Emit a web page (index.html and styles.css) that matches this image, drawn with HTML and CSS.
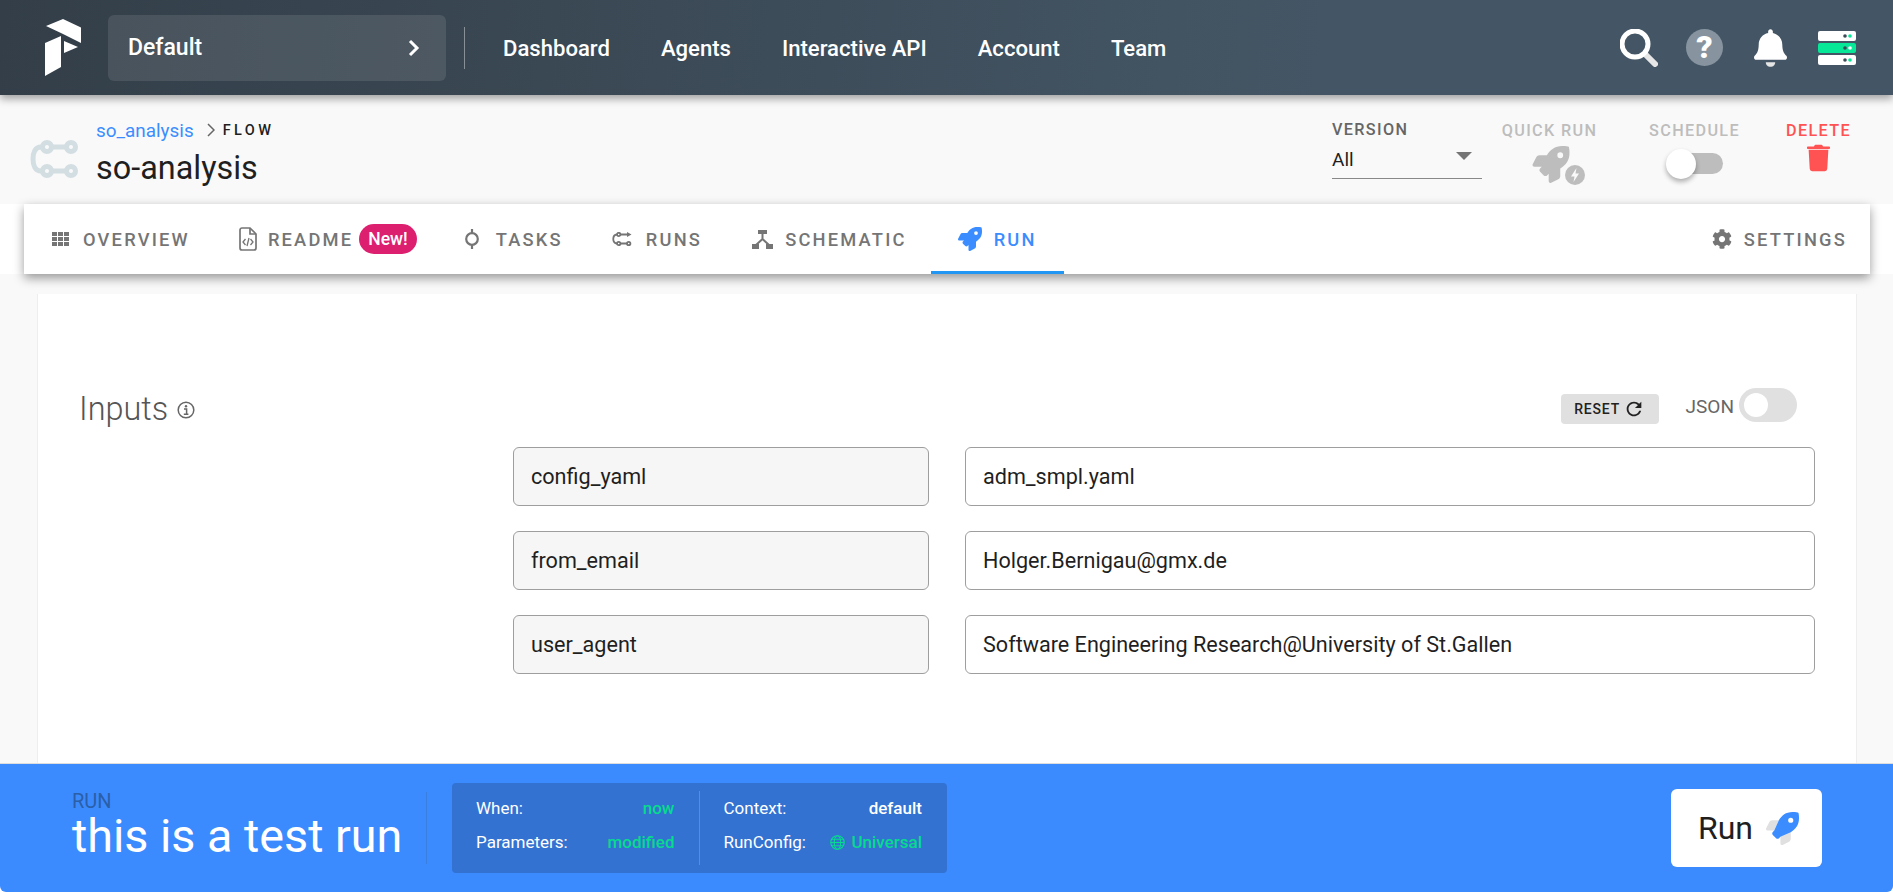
FILE: index.html
```html
<!DOCTYPE html>
<html lang="en">
<head>
  <meta charset="UTF-8">
  <meta name="viewport" content="width=device-width, initial-scale=1.0">
  <title>so-analysis | Run</title>
  <link rel="stylesheet" href="styles.css">
</head>
<body>
  <!-- Top Navigation -->
  <header class="topbar">
    <svg class="logo" viewBox="0 0 36 57">
      <path fill="#fff" d="M1 7 18 0 36 8.500V24L17 14.500Z"/>
      <path fill="#fff" d="M0 24 16 17V48L0 57Z"/>
      <path fill="#fff" d="M19 22 33 28 19 34Z"/>
    </svg>
    <div class="team-select">
      <span>Default</span>
      <svg class="team-chevron" viewBox="0 0 12 18"><path d="M2 2l7 7-7 7" fill="none" stroke="#fff" stroke-width="3"/></svg>
    </div>
    <div class="nav-divider"></div>
    <nav class="main-nav">
      <a>Dashboard</a>
      <a>Agents</a>
      <a>Interactive API</a>
      <a>Account</a>
      <a>Team</a>
    </nav>
    <div class="top-icons">
      <svg class="icon-search" viewBox="0 0 38 38">
        <path d="M25 25l10 10" stroke="#e6e6e6" stroke-width="6" stroke-linecap="round"/>
        <circle cx="15" cy="15" r="13" fill="none" stroke="#fff" stroke-width="5"/>
      </svg>
      <div class="help-icon">?</div>
      <svg class="icon-bell" viewBox="0 0 448 512">
        <path fill="#e6e6e6" d="M224 512c35.320 0 63.970-28.650 63.970-64H160.030c0 35.350 28.650 64 63.970 64z"/>
        <path fill="#fff" d="M439.390 362.290c-19.320-20.760-55.470-51.990-55.470-154.290 0-77.700-54.480-139.900-127.940-155.160V32c0-17.670-14.320-32-31.980-32s-31.980 14.330-31.980 32v20.840C118.560 68.100 64.080 130.300 64.080 208c0 102.300-36.150 133.530-55.470 154.290-6 6.450-8.660 14.160-8.610 21.710.11 16.400 12.980 32 32.100 32h383.800c19.120 0 32-15.600 32.100-32 .05-7.550-2.610-15.270-8.610-21.710z"/>
      </svg>
      <svg class="icon-server" viewBox="0 0 38 34">
        <rect width="38" height="10" rx="2" fill="#fff"/>
        <rect y="12" width="38" height="10" rx="2" fill="#07e798"/>
        <rect y="24" width="38" height="10" rx="2" fill="#fff"/>
        <circle cx="27" cy="5" r="1.800" fill="#3b4a57"/><circle cx="32" cy="5" r="1.800" fill="#07e798"/>
        <circle cx="27" cy="17" r="1.800" fill="#3b4a57"/><circle cx="32" cy="17" r="1.800" fill="#fff"/>
        <circle cx="27" cy="29" r="1.800" fill="#3b4a57"/><circle cx="32" cy="29" r="1.800" fill="#07e798"/>
      </svg>
    </div>
  </header>

  <!-- Flow Header -->
  <section class="flow-head">
    <svg class="flow-icon" viewBox="0 0 48 38">
      <g fill="none" stroke="#d3dee3" stroke-width="5">
        <circle cx="17" cy="7" r="4.500"/>
        <circle cx="41" cy="7" r="4.500"/>
        <circle cx="17" cy="31" r="4.500"/>
        <circle cx="41" cy="31" r="4.500"/>
        <path d="M22 7H36M22 31H36M12 7H11C5 7 3 13 3 19s2 12 8 12h1"/>
      </g>
    </svg>
    <div class="flow-title">
      <div class="crumbs">
        <a>so_analysis</a>
        <svg class="crumb-chevron" viewBox="0 0 8 14"><path d="M1 1l6 6-6 6" fill="none" stroke="#666" stroke-width="1.500"/></svg>
        <span>FLOW</span>
      </div>
      <h1>so-analysis</h1>
    </div>
    <div class="flow-actions">
      <div class="version">
        <label>VERSION</label>
        <div class="version-select"><span>All</span><i class="caret"></i></div>
      </div>
      <div class="action quick-run">
        <label>QUICK RUN</label>
        <div class="quick-icon">
          <svg class="quick-rocket" viewBox="0 0 512 512"><path fill="#bdbdbd" d="M505.120 19.090c-1.190-5.530-6.660-11-12.210-12.190C460.720 0 435.510 0 410.410 0 307.180 0 245.270 55.200 199.050 128H94.840c-16.350.02-35.560 11.880-42.890 26.480L2.520 253.300A28.400 28.400 0 0 0 0 264a24 24 0 0 0 24 24h103.820l-22.470 22.470c-11.370 11.360-13 32.260 0 45.250l50.900 50.900c11.160 11.190 32.160 13.160 45.280 0l22.470-22.470V488a24 24 0 0 0 24 24 28.560 28.560 0 0 0 10.710-2.520l98.730-49.390c14.630-7.300 26.510-26.500 26.510-42.860V312.800c72.600-46.310 128.030-108.410 128.030-211.100.03-25.200.03-50.400-6.880-82.610zM384.040 168a40 40 0 1 1 40.010-40 40.020 40.020 0 0 1-40.010 40z"/></svg>
          <svg class="quick-bolt" viewBox="0 0 22 22">
            <circle cx="11" cy="11" r="10" fill="#bdbdbd"/>
            <path d="M12.500 4 7 12.500h3.500L9.500 18 15 9.500h-3.500z" fill="#fafafa"/>
          </svg>
        </div>
      </div>
      <div class="action schedule">
        <label>SCHEDULE</label>
        <div class="switch"><i></i></div>
      </div>
      <div class="action delete">
        <label>DELETE</label>
        <svg class="trash" viewBox="0 0 448 512"><path fill="#ff5252" d="M432 32H312l-9.400-18.700A24 24 0 0 0 281.100 0H166.800a23.720 23.720 0 0 0-21.400 13.300L136 32H16A16 16 0 0 0 0 48v16a16 16 0 0 0 16 16h416a16 16 0 0 0 16-16V48a16 16 0 0 0-16-16zM53.200 467a48 48 0 0 0 47.900 45h245.800a48 48 0 0 0 47.900-45L416 96H32z"/></svg>
      </div>
    </div>
  </section>

  <!-- Tabs -->
  <div class="tabs">
    <a class="tab">
      <svg class="tab-icon th" viewBox="0 0 17 14"><path fill="#757575" d="M0 0h5v4H0zM6 0h5v4H6zM12 0h5v4h-5zM0 5h5v4H0zM6 5h5v4H6zM12 5h5v4h-5zM0 10h5v4H0zM6 10h5v4H6zM12 10h5v4h-5z"/></svg>
      OVERVIEW
    </a>
    <a class="tab">
      <svg class="tab-icon file" viewBox="0 0 18 24">
        <path d="M1 3a2 2 0 0 1 2-2h8l6 6v14a2 2 0 0 1-2 2H3a2 2 0 0 1-2-2z" fill="none" stroke="#757575" stroke-width="1.700"/>
        <path d="M11 1v6h6" fill="none" stroke="#757575" stroke-width="1.700"/>
        <path d="M6.500 12 4 15l2.500 3M11.500 12l2.500 3-2.500 3M10 11l-2 8" fill="none" stroke="#757575" stroke-width="1.300"/>
      </svg>
      README
      <span class="badge">New!</span>
    </a>
    <a class="tab tab-tasks">
      <svg class="tab-icon task" viewBox="0 0 16 20">
        <circle cx="8" cy="10" r="5.800" fill="none" stroke="#757575" stroke-width="2.200"/>
        <path d="M8 0v4M8 16v4" stroke="#757575" stroke-width="2.200"/>
      </svg>
      TASKS
    </a>
    <a class="tab">
      <svg class="tab-icon runs" viewBox="0 0 20 15">
        <g fill="none" stroke="#757575" stroke-width="1.800">
          <circle cx="6.700" cy="2.500" r="1.700"/>
          <circle cx="6.700" cy="11.500" r="1.700"/>
          <circle cx="16.700" cy="11.500" r="1.700"/>
          <path d="M8.500 11.500H15M5 2.500C0 3 0 11 5 11.500M9 2.500h6"/>
        </g>
        <path d="M15 0l4.500 2.500L15 5z" fill="#757575"/>
      </svg>
      RUNS
    </a>
    <a class="tab tab-schematic">
      <svg class="tab-icon schematic" viewBox="0 0 21 19">
        <path fill="#757575" d="M6 0h9v4H6zM0 14h7v5H0zM14 14h7v5h-7z"/>
        <path d="M10.500 3v6M10.500 9 4 15M10.500 9 17 15" fill="none" stroke="#757575" stroke-width="2"/>
      </svg>
      SCHEMATIC
    </a>
    <a class="tab tab-active">
      <svg class="tab-icon rocket" viewBox="0 0 512 512"><path fill="#3b8dff" d="M505.120 19.090c-1.190-5.530-6.660-11-12.210-12.190C460.720 0 435.510 0 410.410 0 307.180 0 245.270 55.200 199.050 128H94.840c-16.350.02-35.560 11.880-42.890 26.480L2.520 253.300A28.400 28.400 0 0 0 0 264a24 24 0 0 0 24 24h103.820l-22.470 22.470c-11.370 11.360-13 32.260 0 45.250l50.900 50.900c11.160 11.190 32.160 13.160 45.280 0l22.470-22.470V488a24 24 0 0 0 24 24 28.560 28.560 0 0 0 10.710-2.520l98.730-49.390c14.630-7.300 26.510-26.500 26.510-42.860V312.800c72.600-46.310 128.030-108.410 128.030-211.100.03-25.200.03-50.400-6.880-82.610zM384.040 168a40 40 0 1 1 40.010-40 40.020 40.020 0 0 1-40.010 40z"/></svg>
      RUN
    </a>
    <a class="tab tab-settings">
      <svg class="tab-icon gear" viewBox="0 0 512 512"><path fill="#757575" d="M487.400 315.700l-42.600-24.600c4.300-23.200 4.300-47 0-70.200l42.600-24.600c4.900-2.800 7.100-8.600 5.500-14-11.100-35.600-30-67.800-54.700-94.600-3.800-4.100-10-5.100-14.800-2.300L380.800 110c-17.900-15.400-38.500-27.300-60.800-35.100V25.800c0-5.600-3.900-10.500-9.400-11.700-36.700-8.200-74.300-7.800-109.200 0-5.500 1.200-9.400 6.100-9.400 11.700V75c-22.200 7.900-42.800 19.800-60.800 35.100L88.700 85.500c-4.900-2.800-11-1.900-14.800 2.300-24.700 26.700-43.600 58.900-54.700 94.600-1.700 5.400.6 11.200 5.500 14L67.300 221c-4.300 23.200-4.300 47 0 70.200l-42.600 24.600c-4.900 2.800-7.100 8.600-5.500 14 11.100 35.600 30 67.800 54.700 94.600 3.800 4.100 10 5.100 14.800 2.300l42.600-24.600c17.900 15.400 38.500 27.300 60.800 35.100v49.200c0 5.600 3.900 10.500 9.400 11.700 36.700 8.200 74.300 7.800 109.200 0 5.500-1.200 9.400-6.100 9.400-11.700v-49.200c22.200-7.900 42.800-19.800 60.800-35.100l42.600 24.600c4.900 2.800 11 1.900 14.800-2.300 24.700-26.700 43.600-58.900 54.700-94.600 1.500-5.500-.7-11.300-5.600-14.100zM256 336c-44.100 0-80-35.900-80-80s35.900-80 80-80 80 35.900 80 80-35.900 80-80 80z"/></svg>
      SETTINGS
    </a>
  </div>

  <!-- Run Form -->
  <main class="content">
    <div class="card">
      <div class="inputs-head">
        <div class="inputs-title">
          Inputs
          <svg class="info-icon" viewBox="0 0 18 18">
            <circle cx="9" cy="9" r="7.800" fill="none" stroke="#666" stroke-width="1.500"/>
            <path d="M7 8h2.600v5M6.800 13.200h4.600" fill="none" stroke="#666" stroke-width="1.500"/>
            <circle cx="9" cy="5.300" r="1.200" fill="#666"/>
          </svg>
        </div>
        <button class="reset-btn">
          RESET
          <svg viewBox="0 0 24 24"><path fill="#222" d="M17.650 6.350C16.200 4.900 14.210 4 12 4c-4.420 0-7.990 3.580-7.990 8s3.570 8 7.990 8c3.730 0 6.840-2.550 7.730-6h-2.080c-.82 2.330-3.040 4-5.650 4-3.310 0-6-2.690-6-6s2.690-6 6-6c1.660 0 3.140.69 4.220 1.780L13 11h7V4l-2.350 2.350z"/></svg>
        </button>
        <span class="json-label">JSON</span>
        <div class="json-switch"><i></i></div>
      </div>
      <div class="param-row">
        <div class="param-key">config_yaml</div>
        <div class="param-value">adm_smpl.yaml</div>
      </div>
      <div class="param-row">
        <div class="param-key">from_email</div>
        <div class="param-value">Holger.Bernigau@gmx.de</div>
      </div>
      <div class="param-row">
        <div class="param-key">user_agent</div>
        <div class="param-value">Software Engineering Research@University of St.Gallen</div>
      </div>
    </div>
  </main>

  <!-- Run Footer -->
  <footer class="run-bar">
    <div class="run-name">
      <div class="run-label">RUN</div>
      <div class="run-title">this is a test run</div>
    </div>
    <div class="run-details">
      <div class="details-col">
        <div class="details-row"><span>When:</span><b class="green">now</b></div>
        <div class="details-row"><span>Parameters:</span><b class="green">modified</b></div>
      </div>
      <div class="details-col">
        <div class="details-row"><span>Context:</span><b>default</b></div>
        <div class="details-row">
          <span>RunConfig:</span>
          <b class="green">
            <svg class="globe" viewBox="0 0 14 14">
              <g fill="none" stroke="#06db8e" stroke-width="1">
                <circle cx="7" cy="7" r="6.300"/>
                <ellipse cx="7" cy="7" rx="3" ry="6.300"/>
                <path d="M.7 7h12.600M1.500 4h11M1.500 10h11"/>
              </g>
            </svg>
            Universal
          </b>
        </div>
      </div>
    </div>
    <button class="run-btn">
      Run
      <svg viewBox="0 0 512 512">
        <path fill="#e0e0e0" d="M199 128H94.800c-16.300 0-35.600 11.900-42.900 26.500L2.500 253.300A28 28 0 0 0 0 264a24 24 0 0 0 24 24h104z"/>
        <path fill="#e0e0e0" d="M384 313v105.200c0 16.400-11.900 35.600-26.500 42.900l-98.700 49.400A28.600 28.600 0 0 1 248 512a24 24 0 0 1-24-24V384z"/>
        <path fill="#3b8dff" d="M505 19c-1.200-5.500-6.700-11-12.200-12.200C460.700 0 435.500 0 410.400 0 307.200 0 245.300 55.200 199 128l-71 160-22.500 22.500c-11.400 11.400-13 32.200 0 45.200l50.900 50.900c11.200 11.200 32.200 13.200 45.300 0L224 384l160-71.200c72.600-46.300 128-108.400 128-211.100 0-25.200 0-50.400-7-82.700zM384 168a40 40 0 1 1 40-40 40 40 0 0 1-40 40z"/>
      </svg>
    </button>
  </footer>
</body>
</html>
```

FILE: styles.css
```css
/* General Styling */
* {
  box-sizing: border-box;
}

body {
  margin: 0;
  height: 100vh;
  display: flex;
  flex-direction: column;
  overflow: hidden;
  font-family: 'Roboto', sans-serif;
  background: #fff;
  color: #1f1f1f;
}

label {
  display: block;
}

/* Top Navigation */
.topbar {
  height: 95px;
  flex: none;
  display: flex;
  align-items: center;
  padding-left: 45px;
  padding-right: 37px;
  background: linear-gradient(95deg, #333e48 0%, #445665 70%);
  box-shadow: 0 4px 8px rgba(0, 0, 0, 0.35);
  position: relative;
  z-index: 3;
}

.logo {
  width: 36px;
  height: 57px;
  flex: none;
}

.team-select {
  width: 338px;
  height: 66px;
  margin-left: 27px;
  padding: 0 26px 0 20px;
  display: flex;
  justify-content: space-between;
  align-items: center;
  border-radius: 6px;
  background: rgba(255, 255, 255, 0.1);
  color: #fff;
  font-size: 23px;
  font-weight: 500;
}

.team-chevron {
  width: 12px;
  height: 18px;
}

.nav-divider {
  width: 1px;
  height: 42px;
  margin-left: 18px;
  background: rgba(255, 255, 255, 0.4);
}

.main-nav {
  display: flex;
  gap: 51px;
  margin-left: 38px;
  color: #fff;
  font-size: 22.100px;
  font-weight: 500;
}

.top-icons {
  margin-left: auto;
  display: flex;
  align-items: center;
}

.icon-search {
  width: 38px;
  height: 38px;
}

.help-icon {
  width: 37px;
  height: 37px;
  margin-left: 28px;
  border-radius: 50%;
  background: #87949f;
  color: #fff;
  font-size: 32px;
  font-weight: 900;
  line-height: 37px;
  text-align: center;
}

.icon-bell {
  width: 33px;
  height: 38px;
  margin-left: 31px;
}

.icon-server {
  width: 38px;
  height: 34px;
  margin-left: 31px;
}

/* Flow Header */
.flow-head {
  height: 109px;
  flex: none;
  display: flex;
  align-items: flex-start;
  padding-left: 30px;
  background: #f9f9f9;
}

.flow-icon {
  width: 48px;
  height: 38px;
  margin-top: 45px;
}

.flow-title {
  margin-left: 18px;
  padding-top: 25px;
}

.crumbs {
  display: flex;
  align-items: center;
  height: 20px;
  font-size: 18.900px;
}

.crumbs a {
  color: #3b8dff;
}

.crumb-chevron {
  width: 8px;
  height: 14px;
  margin-left: 13px;
  margin-right: 8px;
}

.crumbs span {
  font-size: 14.500px;
  font-weight: 500;
  letter-spacing: 3.400px;
}

.flow-title h1 {
  margin: 10px 0 0;
  font-size: 32.400px;
  font-weight: 400;
  line-height: 36px;
}

.flow-actions {
  margin-left: auto;
  display: flex;
  padding-right: 41px;
  padding-top: 25px;
}

.version {
  width: 150px;
}

.version label {
  font-size: 16.200px;
  font-weight: 500;
  letter-spacing: 1.350px;
  line-height: 20px;
  color: #666;
}

.version-select {
  height: 40px;
  margin-top: -1px;
  padding-top: 2px;
  display: flex;
  justify-content: space-between;
  align-items: center;
  padding-right: 10px;
  border-bottom: 1px solid #888;
  font-size: 19px;
}

.caret {
  width: 0;
  height: 0;
  border-left: 8px solid transparent;
  border-right: 8px solid transparent;
  border-top: 8px solid #757575;
  margin-bottom: 8px;
}

.action {
  padding-top: 1px;
  text-align: center;
}

.action label {
  font-size: 16.200px;
  font-weight: 500;
  letter-spacing: 1.350px;
  line-height: 20px;
  color: #bdbdbd;
}

.quick-run {
  width: 97px;
  margin-left: 19px;
}

.quick-icon {
  width: 54px;
  height: 40px;
  margin: 5px 0 0 31px;
  position: relative;
}

.quick-rocket {
  width: 38px;
  height: 37px;
  display: block;
}

.quick-bolt {
  position: absolute;
  right: 0;
  bottom: 0;
  width: 22px;
  height: 22px;
}

.schedule {
  width: 93px;
  margin-left: 50px;
}

.switch {
  width: 55px;
  height: 21px;
  margin: 12px 0 0 20px;
  border-radius: 11px;
  background: #bdbdbd;
  position: relative;
}

.switch i {
  position: absolute;
  left: -2px;
  top: -4px;
  width: 30px;
  height: 30px;
  border-radius: 50%;
  background: #fff;
  box-shadow: 0 3px 5px rgba(0, 0, 0, 0.3);
}

.delete {
  width: 67px;
  margin-left: 44px;
}

.delete label {
  color: #ff5252;
}

.trash {
  width: 23px;
  height: 28px;
  display: block;
  margin: 3px auto 0;
}

/* Tabs */
.tabs {
  height: 70px;
  flex: none;
  margin: 0 23px 0 24px;
  display: flex;
  background: #fff;
  box-shadow: 0 4px 10px rgba(0, 0, 0, 0.4);
  position: relative;
  z-index: 2;
}

.tab {
  display: flex;
  align-items: center;
  padding: 0 21px 0 28px;
  color: #757575;
  font-size: 18.300px;
  font-weight: 500;
  letter-spacing: 2.200px;
  white-space: nowrap;
}

.tab-icon {
  flex: none;
  margin-right: 14px;
}

.th {
  width: 17px;
  height: 14px;
}

.file {
  width: 18px;
  height: 24px;
  margin-right: 11px;
}

.task {
  width: 16px;
  height: 20px;
  margin-right: 16px;
}

.runs {
  width: 20px;
  height: 15px;
  margin-right: 14px;
}

.schematic {
  width: 21px;
  height: 19px;
  margin-right: 12px;
}

.rocket {
  width: 24px;
  height: 24px;
  margin-right: 12px;
}

.gear {
  width: 20px;
  height: 20px;
  margin-right: 12px;
}

.badge {
  margin-left: 6px;
  padding: 0 9px;
  height: 30px;
  border-radius: 15px;
  background: #dd1f70;
  color: #fff;
  font-size: 17.500px;
  font-weight: 500;
  letter-spacing: 0;
  line-height: 30px;
}

.tab-tasks {
  margin-left: -2px;
}

.tab-schematic {
  margin-left: 1px;
  padding-right: 24px;
}

.tab-active {
  color: #3b8dff;
  border-bottom: 3px solid #2196f3;
  padding-top: 3px;
  padding-left: 27px;
  padding-right: 27px;
}

.tab-settings {
  margin-left: auto;
  padding-right: 23px;
}

/* Run Form */
.content {
  flex: 1;
  min-height: 0;
  padding: 20px 36px 0 37px;
  background: #f9f9f9;
}

.card {
  height: 100%;
  background: #fff;
  border: 1px solid #eee;
  border-width: 0 1px;
  padding: 96px 41px 0 41px;
}

.inputs-head {
  display: flex;
  align-items: center;
  height: 34px;
  margin-bottom: 23px;
  padding-right: 18px;
}

.inputs-title {
  display: flex;
  align-items: center;
  margin-right: auto;
  padding-top: 3px;
  font-size: 32.400px;
  font-weight: 300;
  color: #555;
}

.info-icon {
  width: 18px;
  height: 18px;
  margin-left: 9px;
  margin-top: 3px;
}

.reset-btn {
  width: 98px;
  height: 30px;
  margin-top: 3px;
  display: flex;
  align-items: center;
  justify-content: center;
  gap: 3px;
  border: none;
  border-radius: 4px;
  background: #e0e0e0;
  color: #222;
  font-family: inherit;
  font-size: 14px;
  font-weight: 500;
  letter-spacing: 0.800px;
}

.reset-btn svg {
  width: 22px;
  height: 22px;
}

.json-label {
  margin-left: 27px;
  margin-top: -2px;
  font-size: 19px;
  color: #666;
}

.json-switch {
  width: 58px;
  height: 34px;
  margin-left: 5px;
  margin-top: -5px;
  padding: 5px;
  border-radius: 17px;
  background: #e0e0e0;
}

.json-switch i {
  display: block;
  width: 24px;
  height: 24px;
  border-radius: 50%;
  background: #fff;
}

.param-row {
  display: flex;
  gap: 36px;
  margin-left: 434px;
  margin-bottom: 25px;
}

.param-key,
.param-value {
  height: 59px;
  display: flex;
  align-items: center;
  padding: 0 17px;
  border: 1px solid #9e9e9e;
  border-radius: 6px;
  font-size: 21.600px;
  color: #1f1f1f;
}

.param-key {
  width: 416px;
  background: #f6f6f6;
}

.param-value {
  flex: 1;
}

/* Run Footer */
.run-bar {
  height: 129px;
  flex: none;
  display: flex;
  align-items: center;
  padding: 0 71px 0 72px;
  background: #3b8bff;
  border-top: 1px solid #ddd;
  border-radius: 0 0 6px 6px;
  color: #fff;
}

.run-name {
  width: 355px;
  height: 72px;
  border-right: 1px solid #3a7ee0;
}

.run-label {
  margin-top: -3px;
  font-size: 20px;
  line-height: 24px;
  color: #2b5fa8;
}

.run-title {
  font-size: 46.700px;
  font-weight: 400;
  line-height: 46px;
}

.run-details {
  width: 495px;
  height: 90px;
  margin-left: 25px;
  display: flex;
  align-items: center;
  padding: 0 25px 0 24px;
  border-radius: 4px;
  background: #3372d1;
  font-size: 17px;
}

.details-col {
  flex: 1;
  height: 74px;
  display: flex;
  flex-direction: column;
  justify-content: center;
  gap: 14px;
  padding-bottom: 6px;
}

.details-col:first-child {
  padding-right: 24px;
  border-right: 1px solid #5a8cdc;
}

.details-col:last-child {
  padding-left: 24px;
}

.details-row {
  display: flex;
  justify-content: space-between;
  line-height: 20px;
}

.details-row b {
  font-weight: 500;
  display: flex;
  align-items: center;
}

.green {
  color: #06db8e;
}

.globe {
  width: 15px;
  height: 15px;
  margin-right: 6px;
}

.run-btn {
  width: 151px;
  height: 78px;
  margin-left: auto;
  padding-left: 10px;
  display: flex;
  align-items: center;
  justify-content: center;
  gap: 13px;
  border: none;
  border-radius: 6px;
  background: #fff;
  color: #1f1f1f;
  font-family: inherit;
  font-size: 32px;
}

.run-btn svg {
  width: 33px;
  height: 33px;
}
```
